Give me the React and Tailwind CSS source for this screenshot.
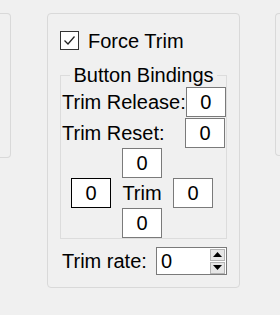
import React from 'react';

const Box = ({ value = '0', dark = false, className = '' }) => (
  <div
    className={`w-[40px] h-[30px] shrink-0 bg-white border flex items-center justify-center ${
      dark ? 'border-black' : 'border-[#7a7a7a]'
    } ${className}`}
  >
    {value}
  </div>
);

const CheckIcon = () => (
  <svg width="17" height="17" viewBox="0 0 17 17">
    <polyline points="3.5,8.5 7,12 13.5,4.5" fill="none" stroke="#222" strokeWidth="1.3" />
  </svg>
);

const SpinButtons = () => (
  <div className="flex flex-col gap-[1px] mr-[1px]">
    <div className="w-[15px] h-[12px] bg-[#e6e6e6] border border-[#b4b4b4] flex items-center justify-center">
      <svg width="9" height="5" viewBox="0 0 9 5">
        <polygon points="0,5 4.5,0 9,5" fill="#000" />
      </svg>
    </div>
    <div className="w-[15px] h-[12px] bg-[#e6e6e6] border border-[#b4b4b4] flex items-center justify-center">
      <svg width="9" height="5" viewBox="0 0 9 5">
        <polygon points="0,0 9,0 4.5,5" fill="#000" />
      </svg>
    </div>
  </div>
);

export default function App() {
  return (
    <div className="w-[280px] h-[315px] bg-[#f0f0f0] overflow-hidden font-['Liberation_Sans',Arial,sans-serif] text-[20px] text-black whitespace-nowrap">
      <div className="flex items-start pt-[13px]">
        {/* left neighbour panel (cut off) */}
        <div className="w-[11px] h-[145px] shrink-0 border-y border-r border-[#d9d9d9] rounded-r-[4px]" />

        {/* main group */}
        <div className="ml-[36px] w-[193px] h-[275px] shrink-0 border border-[#d9d9d9] rounded-[4px] pl-[12px] pr-[12px] pt-[17px]">
          <div className="flex items-center gap-[9px] h-[19px]">
            <div className="w-[19px] h-[19px] bg-white border border-[#333] flex items-center justify-center">
              <CheckIcon />
            </div>
            <span className="leading-[22px]">Force Trim</span>
          </div>

          <fieldset className="mt-[14px] w-[167px] min-w-0 border border-[#dcdcdc] px-0 pb-0">
            <legend className="mx-auto px-[3px] leading-[22px]">Button Bindings</legend>

            <div className="mt-[1px] flex flex-col gap-[1px]">
              <div className="flex items-center justify-between pl-[1px] pr-[1px]">
                <span className="leading-[22px]">Trim Release:</span>
                <Box />
              </div>
              <div className="flex items-center justify-between pl-[1px] pr-[1px]">
                <span className="leading-[22px]">Trim Reset:</span>
                <Box />
              </div>
            </div>

            <div className="ml-[10px] grid grid-cols-[40px_40px_40px] gap-x-[11px]">
              <div />
              <Box className="h-[29px]" />
              <div />
              <Box className="h-[29px]" dark />
              <div className="h-[29px] flex items-center justify-center leading-[22px]">Trim</div>
              <Box className="h-[29px]" />
              <div />
              <Box className="h-[29px]" />
              <div />
            </div>
          </fieldset>

          <div className="mt-[8px] w-[167px] flex items-center justify-between pl-[2px]">
            <span className="leading-[22px]">Trim rate:</span>
            <div className="w-[71px] h-[28px] bg-white border border-[#7a7a7a] flex items-center justify-between pl-[4px]">
              <span className="leading-[22px]">0</span>
              <SpinButtons />
            </div>
          </div>
        </div>

        {/* right neighbour panel (cut off) */}
        <div className="ml-[35px] w-[10px] h-[143px] shrink-0 border-y border-l border-[#d9d9d9] rounded-l-[4px]" />
      </div>
    </div>
  );
}
